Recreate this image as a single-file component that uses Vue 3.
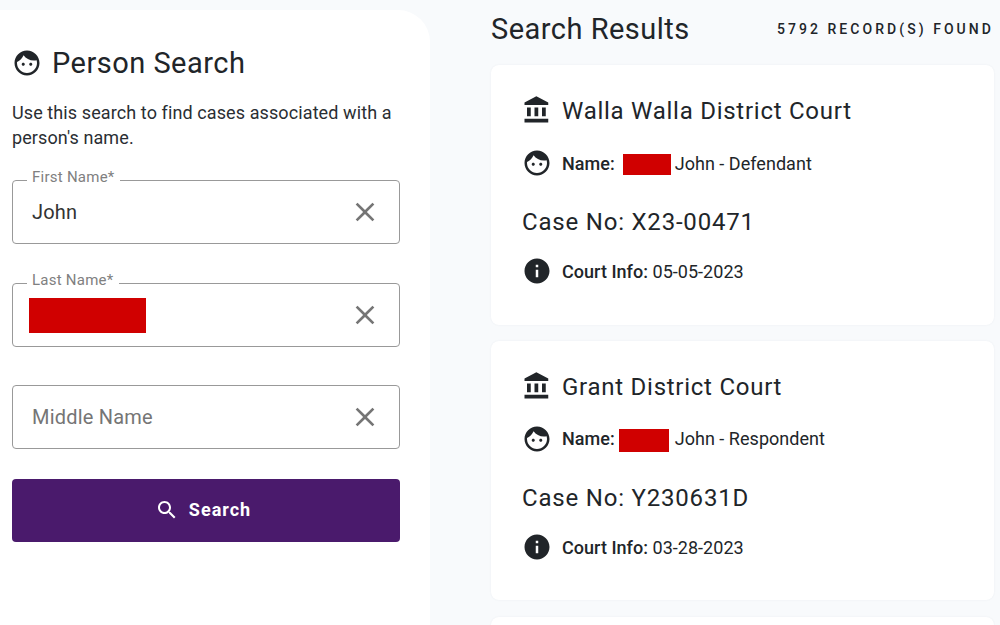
<script setup>
const faceD = 'M9 11.75c-.69 0-1.25.56-1.25 1.25s.56 1.25 1.25 1.25 1.25-.56 1.25-1.25-.56-1.25-1.25-1.25zm6 0c-.69 0-1.25.56-1.25 1.25s.56 1.25 1.25 1.25 1.25-.56 1.25-1.25-.56-1.25-1.25-1.25zM12 2C6.48 2 2 6.48 2 12s4.48 10 10 10 10-4.48 10-10S17.52 2 12 2zm0 18c-4.41 0-8-3.59-8-8 0-.29.02-.58.05-.86 2.36-1.05 4.23-2.98 5.21-5.37C11.07 8.33 14.05 10 17.42 10c.78 0 1.53-.09 2.25-.26.21.71.33 1.47.33 2.26 0 4.41-3.59 8-8 8z'
const bankD = 'M4 10v7h3v-7H4zm6 0v7h3v-7h-3zM2 22h19v-3H2v3zm14-12v7h3v-7h-3zm-4.5-9L2 6v2h19V6l-9.5-5z'
const infoD = 'M12 2C6.48 2 2 6.48 2 12s4.48 10 10 10 10-4.48 10-10S17.52 2 12 2zm1 15h-2v-6h2v6zm0-8h-2V7h2v2z'
const closeD = 'M19 6.41L17.59 5 12 10.59 6.41 5 5 6.41 10.59 12 5 17.59 6.41 19 12 13.41 17.59 19 19 17.59 13.41 12z'
const searchD = 'M15.5 14h-.79l-.28-.27C15.41 12.59 16 11.11 16 9.5 16 5.91 13.09 3 9.5 3S3 5.91 3 9.5 5.91 16 9.5 16c1.61 0 3.09-.59 4.23-1.57l.27.28v.79l5 4.99L20.49 19l-4.99-5zm-6 0C7.01 14 5 11.99 5 9.5S7.01 5 9.5 5 14 7.01 14 9.5 11.99 14 9.5 14z'

const fields = [
  { label: 'First Name*', value: 'John', cls: 'first' },
  { label: 'Last Name*', value: '', cls: 'last', redacted: true },
  { label: '', value: '', placeholder: 'Middle Name', cls: 'middle' },
]

const cards = [
  { court: 'Walla Walla District Court', role: 'John - Defendant', caseNo: 'X23-00471', date: '05-05-2023', cls: 'one' },
  { court: 'Grant District Court', role: 'John - Respondent', caseNo: 'Y230631D', date: '03-28-2023', cls: 'two' },
]
</script>

<template>
  <div class="page">
    <aside class="panel">
      <h2 class="panel-title">
        <svg class="icon" viewBox="0 0 24 24"><path :d="faceD" /></svg>
        <span>Person Search</span>
      </h2>
      <p class="intro">Use this search to find cases associated with a person's name.</p>
      <form class="form" @submit.prevent>
        <div v-for="f in fields" :key="f.cls" class="field" :class="f.cls">
          <label v-if="f.label" class="float">{{ f.label }}</label>
          <input class="input" :value="f.value" :placeholder="f.placeholder" />
          <span v-if="f.redacted" class="redact-input"></span>
          <svg class="clear" viewBox="0 0 24 24"><path :d="closeD" /></svg>
        </div>
        <button class="btn" type="submit">
          <svg class="btn-icon" viewBox="0 0 24 24"><path :d="searchD" /></svg>
          <span>Search</span>
        </button>
      </form>
    </aside>

    <main class="results">
      <header class="results-head">
        <h2 class="results-title">Search Results</h2>
        <span class="count">5792 RECORD(S) FOUND</span>
      </header>
      <article v-for="c in cards" :key="c.caseNo" class="card" :class="c.cls">
        <div class="row court">
          <svg class="icon" viewBox="0 0 24 24"><path :d="bankD" /></svg>
          <h3>{{ c.court }}</h3>
        </div>
        <div class="row name">
          <svg class="icon" viewBox="0 0 24 24"><path :d="faceD" /></svg>
          <span class="text"><b>Name:</b><span class="redact"></span><span>{{ c.role }}</span></span>
        </div>
        <div class="case">Case No: {{ c.caseNo }}</div>
        <div class="row info">
          <svg class="icon" viewBox="0 0 24 24"><path :d="infoD" /></svg>
          <span class="text"><b>Court Info:</b> {{ c.date }}</span>
        </div>
      </article>
      <article class="card stub"></article>
    </main>
  </div>
</template>

<style>
html, body { margin: 0; background: #f8fafc; }
</style>

<style scoped>
.page {
  display: flex;
  height: 625px;
  overflow: hidden;
  background: #f8fafc;
  color: #212529;
  font-family: Roboto, "Liberation Sans", sans-serif;
}
.panel {
  box-sizing: border-box;
  width: 430px;
  flex: none;
  margin-top: 10px;
  padding: 35px 30px 0 12px;
  background: #fff;
  border-top-right-radius: 32px;
}
.panel-title {
  display: flex;
  align-items: center;
  gap: 10px;
  margin: 0;
  height: 35px;
  font-size: 29px;
  font-weight: 400;
  letter-spacing: 0.48px;
}
.icon { width: 30px; height: 30px; flex: none; fill: #212529; }
.intro {
  margin: 20px 0 0;
  font-size: 18px;
  line-height: 25px;
  letter-spacing: 0.1px;
  color: #2a2e33;
}
.form { display: flex; flex-direction: column; margin-top: 30px; }
.field { position: relative; height: 64px; }
.last { margin-top: 39px; }
.middle { margin-top: 38px; }
.input {
  box-sizing: border-box;
  display: block;
  width: 100%;
  height: 100%;
  padding: 0 60px 0 19px;
  border: 1px solid #999;
  border-radius: 4px;
  background: #fff;
  outline: none;
  font: 400 20px Roboto, sans-serif;
  letter-spacing: 0.2px;
  color: #333;
}
.input::placeholder { color: #757575; opacity: 1; }
.float {
  position: absolute;
  left: 15px;
  top: -13px;
  padding: 0 5px;
  background: #fff;
  font-size: 15px;
  line-height: 20px;
  letter-spacing: 0.25px;
  color: #808080;
}
.redact-input {
  position: absolute;
  left: 17px;
  top: 15px;
  width: 117px;
  height: 35px;
  background: #d00000;
}
.clear {
  position: absolute;
  right: 19px;
  top: 16px;
  width: 32px;
  height: 32px;
  fill: #757575;
}
.btn {
  display: flex;
  align-items: center;
  justify-content: center;
  gap: 10px;
  height: 63px;
  margin-top: 30px;
  padding: 0 6px 2px 0;
  border: 0;
  border-radius: 4px;
  background: #4a1a6c;
  color: #fff;
  font: 700 18px Roboto, sans-serif;
  letter-spacing: 1px;
}
.btn-icon { width: 24px; height: 24px; fill: #fff; }
.results {
  width: 503px;
  flex: none;
  margin-left: 61px;
}
.results-head {
  display: flex;
  align-items: center;
  justify-content: space-between;
  height: 57px;
}
.results-title {
  margin: 0;
  font-size: 29px;
  font-weight: 400;
  letter-spacing: 0.48px;
}
.count {
  font-size: 14px;
  font-weight: 500;
  letter-spacing: 3.05px;
}
.card {
  box-sizing: border-box;
  height: 260px;
  margin-top: 16px;
  padding: 30px 31px 0;
  background: #fff;
  border-radius: 8px;
  box-shadow: 0 0 2px rgba(60, 80, 120, 0.08);
}
.card.one { margin-top: 8px; }
.card.two { height: 259px; }
.stub { margin-top: 17px; }
.row { display: flex; align-items: center; gap: 10px; }
.court { height: 30px; }
.court h3 {
  margin: 0;
  padding-top: 2px;
  font-size: 24px;
  font-weight: 400;
  letter-spacing: 0.74px;
}
.name { margin-top: 23px; height: 30px; }
.name .text { padding-top: 2px; }
.text { font-size: 18px; letter-spacing: 0.03px; }
.text b { font-weight: 500; }
.redact {
  display: inline-block;
  width: 48px;
  height: 21px;
  margin: 0 4px 0 8px;
  vertical-align: middle;
  background: #d00000;
}
.two .redact { width: 50px; height: 23px; margin: 0 6px 0 4px; }
.case {
  margin-top: 29px;
  font-size: 24px;
  line-height: 30px;
  letter-spacing: 0.8px;
}
.info { margin-top: 19px; height: 30px; }
</style>
